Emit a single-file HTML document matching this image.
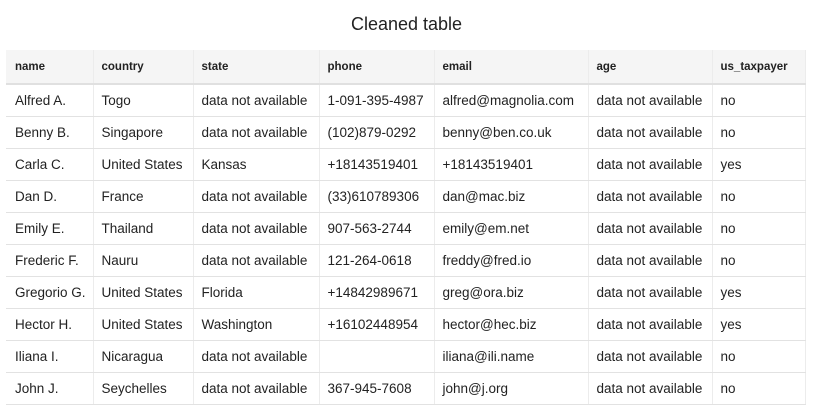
<!DOCTYPE html>
<html><head><style>
body{margin:0;background:#fff;font-family:"Liberation Sans",sans-serif;color:#222;width:813px;height:412px;overflow:hidden}
h1{position:absolute;left:0;width:813px;top:14px;margin:0;text-align:center;font-weight:normal;font-size:18px;color:#222}
table{position:absolute;left:6px;top:50px;border-collapse:collapse;table-layout:fixed;width:799px}
td,th{padding:0 0 0 8px;text-align:left;white-space:nowrap;overflow:hidden;font-size:13.5px;height:31px;border-bottom:1px solid #e2e2e2;border-right:1px solid #ececec}
th{background:#f5f5f5;font-size:11.5px;font-weight:bold;height:33px;border-bottom:2px solid #e0e0e0}
td:first-child,th:first-child{padding-left:9px}
</style></head><body>
<h1>Cleaned table</h1>
<table>
<colgroup><col style="width:87px"><col style="width:100px"><col style="width:126px"><col style="width:115px"><col style="width:154px"><col style="width:124px"><col style="width:93px"></colgroup>
<tr><th>name</th><th>country</th><th>state</th><th>phone</th><th>email</th><th>age</th><th>us_taxpayer</th></tr>
<tr><td>Alfred A.</td><td>Togo</td><td>data not available</td><td>1-091-395-4987</td><td>alfred@magnolia.com</td><td>data not available</td><td>no</td></tr>
<tr><td>Benny B.</td><td>Singapore</td><td>data not available</td><td>(102)879-0292</td><td>benny@ben.co.uk</td><td>data not available</td><td>no</td></tr>
<tr><td>Carla C.</td><td>United States</td><td>Kansas</td><td>+18143519401</td><td>+18143519401</td><td>data not available</td><td>yes</td></tr>
<tr><td>Dan D.</td><td>France</td><td>data not available</td><td>(33)610789306</td><td>dan@mac.biz</td><td>data not available</td><td>no</td></tr>
<tr><td>Emily E.</td><td>Thailand</td><td>data not available</td><td>907-563-2744</td><td>emily@em.net</td><td>data not available</td><td>no</td></tr>
<tr><td>Frederic F.</td><td>Nauru</td><td>data not available</td><td>121-264-0618</td><td>freddy@fred.io</td><td>data not available</td><td>no</td></tr>
<tr><td>Gregorio G.</td><td>United States</td><td>Florida</td><td>+14842989671</td><td>greg@ora.biz</td><td>data not available</td><td>yes</td></tr>
<tr><td>Hector H.</td><td>United States</td><td>Washington</td><td>+16102448954</td><td>hector@hec.biz</td><td>data not available</td><td>yes</td></tr>
<tr><td>Iliana I.</td><td>Nicaragua</td><td>data not available</td><td></td><td>iliana@ili.name</td><td>data not available</td><td>no</td></tr>
<tr><td>John J.</td><td>Seychelles</td><td>data not available</td><td>367-945-7608</td><td>john@j.org</td><td>data not available</td><td>no</td></tr>
</table>
</body></html>
